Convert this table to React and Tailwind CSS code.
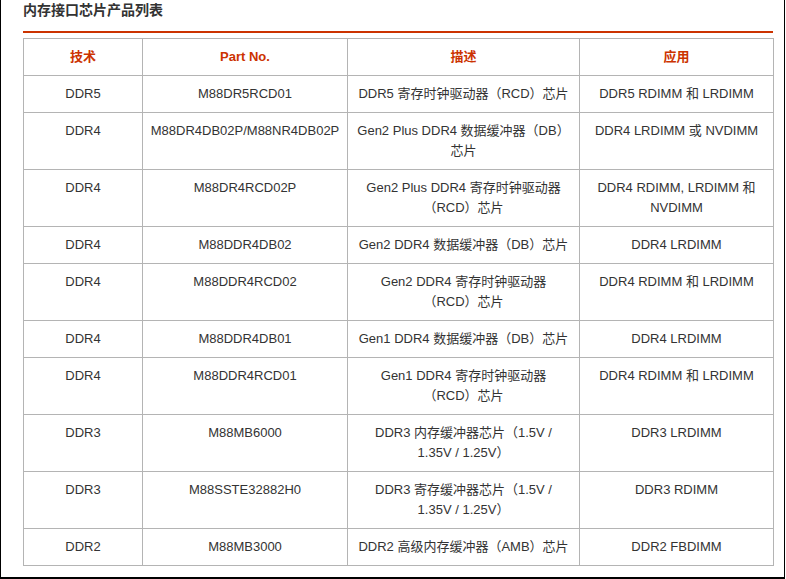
import React from "react";

const rows = [
	["DDR5", "M88DR5RCD01", ["DDR5 寄存时钟驱动器（RCD）芯片"], ["DDR5 RDIMM 和 LRDIMM"]],
	["DDR4", "M88DR4DB02P/M88NR4DB02P", ["Gen2 Plus DDR4 数据缓冲器（DB）", "芯片"], ["DDR4 LRDIMM 或 NVDIMM"]],
	["DDR4", "M88DR4RCD02P", ["Gen2 Plus DDR4 寄存时钟驱动器", "（RCD）芯片"], ["DDR4 RDIMM, LRDIMM 和", "NVDIMM"]],
	["DDR4", "M88DDR4DB02", ["Gen2 DDR4 数据缓冲器（DB）芯片"], ["DDR4 LRDIMM"]],
	["DDR4", "M88DDR4RCD02", ["Gen2 DDR4 寄存时钟驱动器", "（RCD）芯片"], ["DDR4 RDIMM 和 LRDIMM"]],
	["DDR4", "M88DDR4DB01", ["Gen1 DDR4 数据缓冲器（DB）芯片"], ["DDR4 LRDIMM"]],
	["DDR4", "M88DDR4RCD01", ["Gen1 DDR4 寄存时钟驱动器", "（RCD）芯片"], ["DDR4 RDIMM 和 LRDIMM"]],
	["DDR3", "M88MB6000", ["DDR3 内存缓冲器芯片（1.5V /", "1.35V / 1.25V）"], ["DDR3 LRDIMM"]],
	["DDR3", "M88SSTE32882H0", ["DDR3 寄存缓冲器芯片（1.5V /", "1.35V / 1.25V）"], ["DDR3 RDIMM"]],
	["DDR2", "M88MB3000", ["DDR2 高级内存缓冲器（AMB）芯片"], ["DDR2 FBDIMM"]],
];

function Lines({ items }) {
	return items.map((t, i) => (
		<React.Fragment key={i}>
			{i > 0 && <br />}
			{t}
		</React.Fragment>
	));
}

export default function App() {
	const cell = "border border-[#b4b4b4] px-1 pt-2 pb-2 align-top text-center leading-5 whitespace-nowrap";
	return (
		<div className="w-[785px] h-[579px] bg-white border-l border-r border-b-2 border-black pl-[22px] text-[13px] text-[#333] font-['Liberation_Sans','Noto_Sans_CJK_SC',sans-serif]">
			<h2 className="text-[14px] font-bold leading-5 text-[#333]">内存接口芯片产品列表</h2>
			<div className="mt-[11px] h-[2px] w-[750px] bg-[#cc3300]" />
			<table className="mt-[5px] w-[750px] table-fixed border-collapse">
				<colgroup>
					<col className="w-[119px]" />
					<col className="w-[205px]" />
					<col className="w-[232px]" />
					<col className="w-[194px]" />
				</colgroup>
				<thead>
					<tr className="text-[#cc3300] font-bold">
						<th className={cell}>技术</th>
						<th className={cell}>Part No.</th>
						<th className={cell}>描述</th>
						<th className={cell}>应用</th>
					</tr>
				</thead>
				<tbody>
					{rows.map((r, i) => (
						<tr key={i}>
							<td className={cell}>{r[0]}</td>
							<td className={cell}>{r[1]}</td>
							<td className={cell}>
								<Lines items={r[2]} />
							</td>
							<td className={cell}>
								<Lines items={r[3]} />
							</td>
						</tr>
					))}
				</tbody>
			</table>
		</div>
	);
}
